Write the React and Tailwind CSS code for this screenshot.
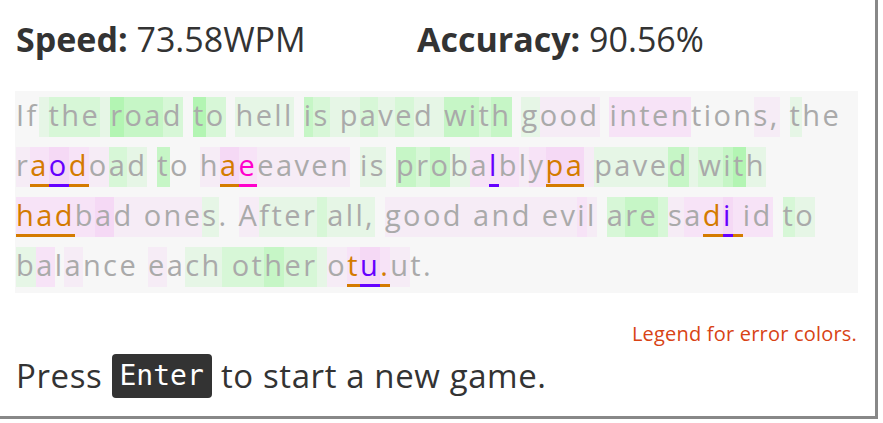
import React from "react";

// passage lines: text, background code per char, error chars by index
// bg: '.' none, 0-3 green (light→strong), a-c pink (light→strong)
// err: o orange, p purple, m magenta
const lines = [
    {
        text: "If the road to hell is paved with good intentions, the",
        bg: "..0111" + "0" + "3221" + "." + "31" + "." + "0000" + "." + "21" + "0" + "01010" + "0" + "2212" + "." + "0aaa" + "." + "bbbbb" + "...." + "aa" + "." + "0..",
        err: {},
    },
    {
        text: "raodoad to haeeaven is probalblypa paved with",
        bg: "abcba10" + ".2.." + "acbaaaaa" + ".00." + "2120bbbab" + "cca" + "00002" + "01230",
        err: { 1: "o", 2: "p", 3: "o", 12: "o", 13: "m", 28: "p", 32: "o", 33: "o" },
    },
    {
        text: "hadbad ones. After all, good and evil are sadi id to",
        bg: "bbbbca" + "a" + "aaa" + "0" + ".." + "a" + "0000" + "1" + "0000" + "." + "aaaa" + "a" + "aaa" + "a" + "aaba" + "." + "1221" + "abbcbbb" + "." + "10",
        err: { 0: "o", 1: "o", 2: "o", 44: "o", 45: "p", 46: "o" },
    },
    {
        text: "balance each other otu.ut.",
        bg: "0b.a....a.00111211" + "0abcba..",
        err: { 20: "o", 21: "p", 22: "o" },
    },
];

const bgClass = {
    "0": "bg-[#e6f6e6]",
    "1": "bg-[#d7f7d7]",
    "2": "bg-[#c6f6c6]",
    "3": "bg-[#b3f5b3]",
    a: "bg-[#f6ecf6]",
    b: "bg-[#f7e3f7]",
    c: "bg-[#f5d9f5]",
};

const errClass = {
    o: "text-[#d47b00] border-b-[3px] border-[#d47b00]",
    p: "text-[#6600ff] border-b-[3px] border-[#6600ff]",
    m: "text-[#ff00cc] border-b-[3px] border-[#ff00cc]",
};

function PassageLine({ line }) {
    return (
        <div className="flex h-[50px] items-center">
            {line.text.split("").map((ch, i) => {
                const b = bgClass[line.bg[i]] || "";
                const e = errClass[line.err[i]] || "";
                return (
                    <span key={i} className={`h-[40px] leading-[36px] whitespace-pre ${b} ${e}`}>
                        {ch}
                    </span>
                );
            })}
        </div>
    );
}

export default function App() {
    return (
        <div
            className="w-[878px] h-[419px] bg-white border-r-[3px] border-b-[3px] border-[#888] text-[#333]"
            style={{ fontFamily: '"Open Sans", "Noto Sans", sans-serif' }}
        >
            <div className="flex pt-[19px] pl-[16px] text-[34px] leading-[40px]">
                <div className="w-[401px]">
                    <span className="font-bold">Speed:</span> 73.58WPM
                </div>
                <div>
                    <span className="font-bold">Accuracy:</span> 90.56%
                </div>
            </div>

            <div className="mt-[32px] ml-[15px] w-[843px] bg-[#f7f7f7] py-px pl-px text-[29px] tracking-[2.4px] text-[#aaa]">
                {lines.map((line, i) => (
                    <PassageLine key={i} line={line} />
                ))}
            </div>

            <div className="mt-[29px] pr-[18px] text-right text-[20px] tracking-[0.2px] leading-[24px] text-[#d84315]">
                Legend for error colors.
            </div>

            <div className="mt-[8px] pl-[16px] flex items-center h-[44px] text-[33px] tracking-[0.6px] leading-[44px] whitespace-pre">
                <span>Press </span>
                <kbd
                    className="h-[44px] px-[8px] bg-[#333] text-white rounded-[4px] text-[28px] tracking-normal leading-[44px]"
                    style={{ fontFamily: '"DejaVu Sans Mono", monospace' }}
                >
                    Enter
                </kbd>
                <span> to start a new game.</span>
            </div>
        </div>
    );
}
